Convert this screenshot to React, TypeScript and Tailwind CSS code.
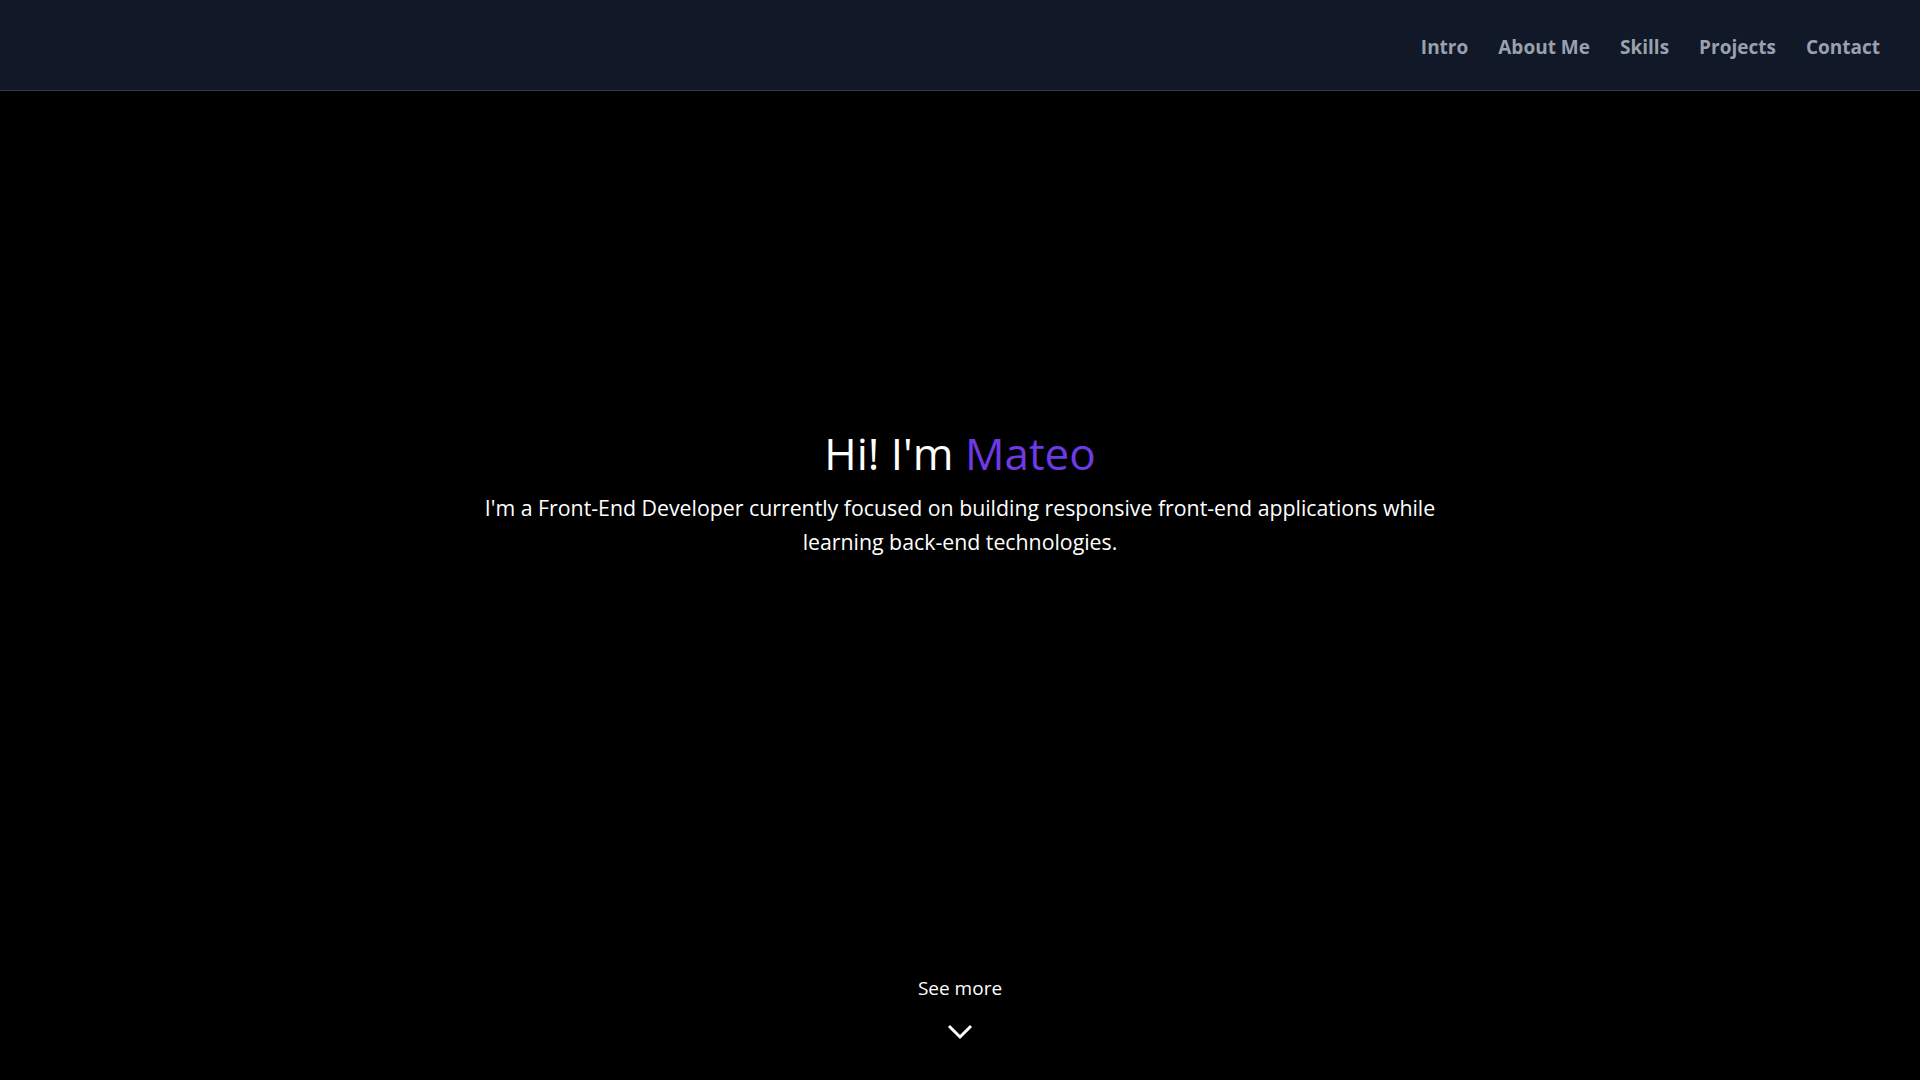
const links = ["Intro", "About Me", "Skills", "Projects", "Contact"];

export default function App() {
  return (
    <div
      className="min-h-screen flex flex-col bg-black text-white"
      style={{ fontFamily: '"Segoe UI", "Open Sans", "Noto Sans", sans-serif' }}
    >
      {/* Navbar */}
      <nav className="h-[91px] shrink-0 bg-[#111827] border-b border-[#2f3a4c] flex items-center justify-end pr-10 pt-1">
        <ul className="flex items-center gap-[30px]">
          {links.map((l) => (
            <li key={l}>
              <a href="#" className="text-[19px] font-bold text-gray-400">
                {l}
              </a>
            </li>
          ))}
        </ul>
      </nav>

      {/* Hero */}
      <main className="flex-1 flex flex-col">
        <div className="flex-1 flex flex-col items-center justify-center pb-[76px] text-center">
          <h1 className="text-[44px] leading-none">
            Hi! I'm <span className="text-[#6d3ae6]">Mateo</span>
          </h1>
          <p className="mt-4 max-w-[1000px] text-[21.3px] leading-[34px]">
            I'm a Front-End Developer currently focused on building responsive front-end applications while learning
            back-end technologies.
          </p>
        </div>

        <a href="#" className="flex flex-col items-center pb-[40px]">
          <span className="text-[19px] leading-7">See more</span>
          <svg width="26" height="16" viewBox="0 0 26 16" className="mt-[22px]" fill="none">
            <polyline points="2,2 13,13 24,2" stroke="white" strokeWidth="3" />
          </svg>
        </a>
      </main>
    </div>
  );
}
